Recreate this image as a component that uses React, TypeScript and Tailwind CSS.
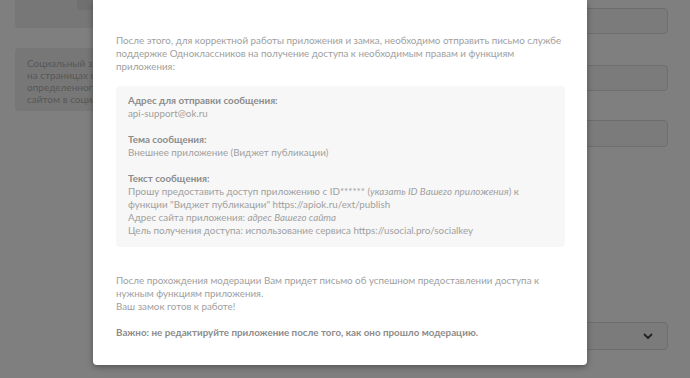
import React from 'react';

const lines = 'leading-[13px]';

const App: React.FC = () => {
  return (
    <div className="relative h-[378px] w-[690px] overflow-hidden bg-white font-['Lato','Open_Sans',sans-serif] text-[9.8px]">
      {/* Page under the modal */}
      <div className="flex h-full px-[15px]">
        <div className="flex w-[300px] flex-col">
          <div className="relative h-[28px] rounded-b bg-[#eeeeee]">
            <div className="absolute right-[222px] top-0 h-[10px] w-[16px] rounded-b bg-[#e0e0e0]" />
          </div>
          <div className="mt-[20px] h-[63px] rounded bg-[#eeeeee] pl-3 pt-[9px] text-[10px] text-[#b0b0b0] leading-[12px]">
            <div className="w-[66px] overflow-hidden whitespace-nowrap">
              <p>Социальный замок позволяет скрыть часть контента</p>
              <p>на страницах сайта до выполнения пользователем</p>
              <p>определенного действия: лайка или поделиться</p>
              <p>сайтом в социальных сетях</p>
            </div>
          </div>
        </div>
        <div className="ml-auto flex w-[200px] flex-col pr-[7px]">
          <div className="mt-[8px] h-[26px] rounded border border-[#dcdcdc] bg-[#f6f6f6]" />
          <div className="mt-[31px] h-[26px] rounded border border-[#dcdcdc] bg-[#f6f6f6]" />
          <div className="mt-[29px] h-[27px] rounded border border-[#dcdcdc] bg-[#f6f6f6]" />
          <div className="mt-[175px] flex h-[28px] items-center justify-end rounded border border-[#dcdcdc] bg-[#f6f6f6] pr-[14px]">
            <svg width="10" height="7" viewBox="0 0 10 7" fill="none">
              <path d="M1.5 1.5L5 5L8.5 1.5" stroke="#444" strokeWidth="1.8" strokeLinecap="round" strokeLinejoin="round" />
            </svg>
          </div>
        </div>
      </div>

      {/* Overlay */}
      <div className="absolute inset-0 bg-black/50">
        <div className="ml-[93px] w-[494px] rounded-b bg-white px-[23px] pb-[26px] pt-[34px] text-[#a0a0a0] shadow-[0_2px_6px_rgba(0,0,0,0.35)]">
          <p className={lines}>
            После этого, для корректной работы приложения и замка, необходимо отправить письмо службе поддержке Одноклассников на получение доступа к необходимым правам и функциям приложения:
          </p>

          <div className={`mt-[13px] mr-[-1px] rounded bg-[#f7f7f7] px-3 pb-[10px] pt-[8px] ${lines}`}>
            <p className="font-bold text-[#8c8c8c]">Адрес для отправки сообщения:</p>
            <p>api-support@ok.ru</p>
            <p className="mt-[13px] font-bold text-[#8c8c8c]">Тема сообщения:</p>
            <p>Внешнее приложение (Виджет публикации)</p>
            <p className="mt-[13px] font-bold text-[#8c8c8c]">Текст сообщения:</p>
            <p>
              Прошу предоставить доступ приложению с ID****** (<i>указать ID Вашего приложения</i>) к функции "Виджет публикации" https://apiok.ru/ext/publish
            </p>
            <p>
              Адрес сайта приложения: <i>адрес Вашего сайта</i>
            </p>
            <p>Цель получения доступа: использование сервиса https://usocial.pro/socialkey</p>
          </div>

          <p className={`mt-[27px] ${lines}`}>
            После прохождения модерации Вам придет письмо об успешном предоставлении доступа к нужным функциям приложения.
            <br />
            Ваш замок готов к работе!
          </p>
          <p className={`mt-[13px] font-bold text-[#8c8c8c] ${lines}`}>
            Важно: не редактируйте приложение после того, как оно прошло модерацию.
          </p>
        </div>
      </div>
    </div>
  );
};

export default App;
